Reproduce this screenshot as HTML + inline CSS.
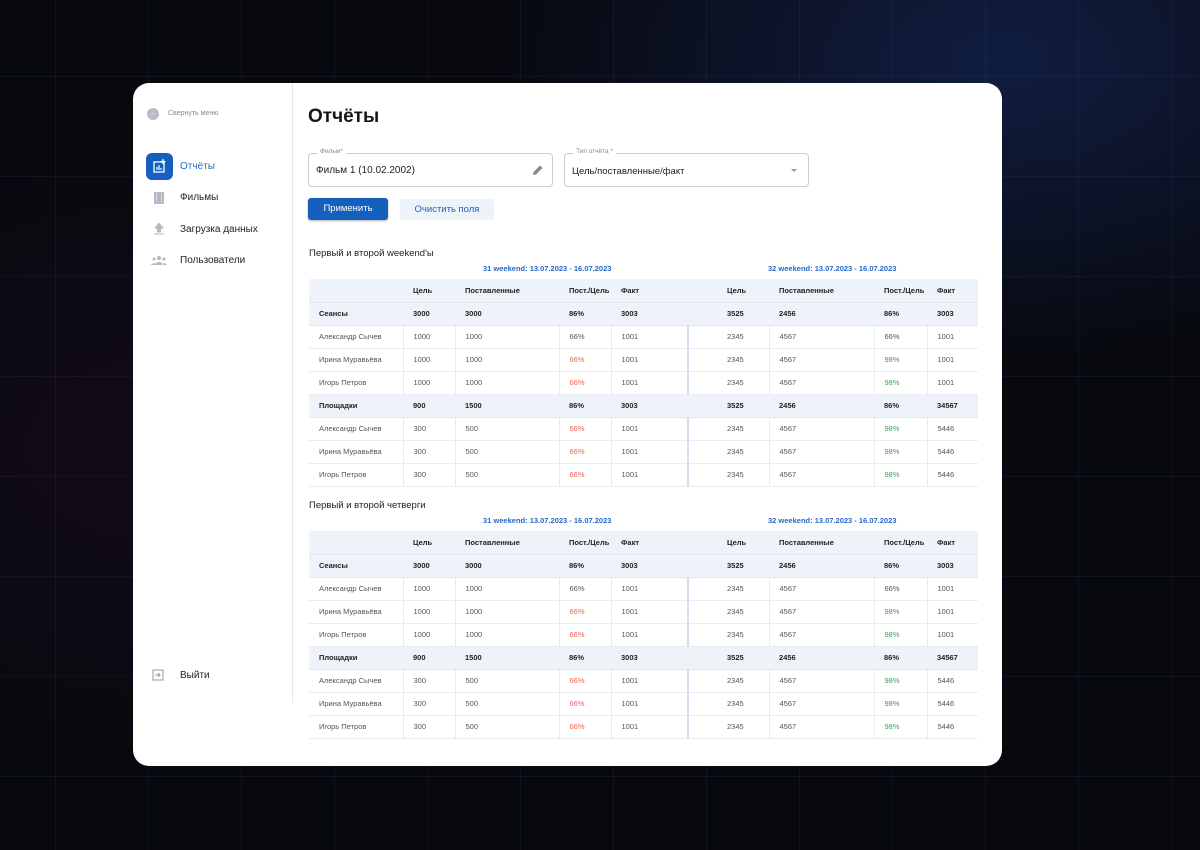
<!DOCTYPE html>
<html><head><meta charset="utf-8"><style>
*{margin:0;padding:0;box-sizing:border-box}
body{width:1200px;height:850px;overflow:hidden;font-family:"Liberation Sans",sans-serif;position:relative;
background:radial-gradient(ellipse 500px 300px at 1000px 60px,rgba(30,60,140,.4),transparent),radial-gradient(ellipse 400px 300px at 150px 450px,rgba(60,20,60,.2),transparent),#08090f;}
.grid{position:absolute;inset:0;background-image:linear-gradient(90deg,rgba(60,70,120,.16) 1px,transparent 1px),linear-gradient(rgba(60,70,120,.16) 1px,transparent 1px);background-size:93px 100px;background-position:55px 76px}
.card{position:absolute;left:133px;top:83px;width:869px;height:683px;background:#fff;border-radius:16px;overflow:hidden}
.side{position:absolute;left:0;top:0;width:160px;height:620px;border-right:1px solid #e6e8ec}
.ab{position:absolute;font-size:10px;color:#222}
h1{position:absolute;left:175px;top:23px;font-size:19px;font-weight:bold;color:#14161c}
.field{position:absolute;border:1px solid #c9ccd2;border-radius:4px;height:34px}
.field .lb{position:absolute;top:-6px;left:8px;background:#fff;padding:0 3px;font-size:6.5px;color:#888}
.field .v{position:absolute;left:7px;top:11px;font-size:10px;color:#222}
table{position:absolute;left:176px;border-collapse:collapse;table-layout:fixed;width:669px;font-size:7.5px;color:#555}
td{height:23px;padding-left:10px;border-bottom:1px solid #e8ecf1;white-space:nowrap}
tr.h td{background:#eef3fa;color:#222;font-weight:bold;border-bottom:1px solid #e3e8f0}
tr.r td{border-right:1px solid #e8ecf1}
tr.r td:last-child{border-right:none}
tr.r td.fk{border-right:2px solid #d5deea}
tr.r td.sep{border-right:none;padding:0}
tr.h td.sep{padding:0}
.red{color:#e8605a}.grn{color:#3aa05a}
.cap{position:absolute;font-size:7.5px;font-weight:bold;color:#2868c6}
.sec{position:absolute;left:176px;font-size:9.5px;color:#222}
</style></head><body>
<div class="grid"></div>
<div class="card">
<div class="side">
 <div style="position:absolute;left:14px;top:25px;width:12px;height:12px;border-radius:50%;background:#b8bcc4"><div style="position:absolute;left:3px;top:3px;color:#fff;font-size:7px;line-height:6px">←</div></div>
 <div class="ab" style="left:35px;top:27px;font-size:7px;color:#888">Свернуть меню</div>
 <div style="position:absolute;left:13px;top:70px;width:27px;height:27px;border-radius:6px;background:#1560bd">
  <svg width="27" height="27" viewBox="0 0 27 27"><rect x="8" y="9" width="10" height="10" fill="none" stroke="#fff" stroke-width="1.3"/><path d="M11 17v-3M13 17v-5M15 17v-2" stroke="#fff" stroke-width="1.2"/><path d="M17 6v5M14.5 8.5h5" stroke="#fff" stroke-width="1.3"/></svg></div>
 <div class="ab" style="left:47px;top:78px;color:#2a6bc8">Отчёты</div>
 <svg style="position:absolute;left:21px;top:109px" width="10" height="12"><rect width="10" height="12" fill="#b4b8c0"/><path d="M2.5 1v10M7.5 1v10" stroke="#fff" stroke-width="1" stroke-dasharray="1 1"/></svg>
 <div class="ab" style="left:47px;top:109px">Фильмы</div>
 <svg style="position:absolute;left:21px;top:140px" width="10" height="12"><path d="M5 0L1 5h2.5v4h3V5H9z M0 11h10" fill="#b4b8c0" stroke="#b4b8c0" stroke-width="1"/></svg>
 <div class="ab" style="left:47px;top:141px">Загрузка данных</div>
 <svg style="position:absolute;left:18px;top:172px" width="16" height="10"><circle cx="8" cy="3" r="2" fill="#b4b8c0"/><circle cx="3" cy="4" r="1.5" fill="#b4b8c0"/><circle cx="13" cy="4" r="1.5" fill="#b4b8c0"/><path d="M4 10a4 3 0 0 1 8 0zM0 10a3 2.5 0 0 1 5-1v1zM16 10a3 2.5 0 0 0-5-1v1z" fill="#b4b8c0"/></svg>
 <div class="ab" style="left:47px;top:172px">Пользователи</div>
 <svg style="position:absolute;left:19px;top:586px" width="12" height="12"><path d="M1 1h10v10H1z" fill="none" stroke="#999" stroke-width="1"/><path d="M3 6h5M6 4l2 2-2 2" fill="none" stroke="#999" stroke-width="1"/></svg>
 <div class="ab" style="left:47px;top:587px">Выйти</div>
</div>
<h1>Отчёты</h1>
<div class="field" style="left:175px;top:70px;width:245px"><span class="lb">Фильм*</span><span class="v">Фильм 1 (10.02.2002)</span>
<svg style="position:absolute;right:9px;top:11px" width="11" height="11"><path d="M1 10l.5-3L8 .5l2.5 2.5L4 9.5z" fill="#888"/></svg></div>
<div class="field" style="left:431px;top:70px;width:245px"><span class="lb">Тип отчёта *</span><span class="v" style="top:12px;font-size:9.5px">Цель/поставленные/факт</span>
<div style="position:absolute;right:11px;top:15px;border:3px solid transparent;border-top:3px solid #999"></div></div>
<div style="position:absolute;left:175px;top:115px;width:80px;height:22px;background:#1560bd;border-radius:3px;color:#fff;font-size:9.5px;text-align:center;line-height:22px;box-shadow:0 1px 2px rgba(0,0,0,.3)">Применить</div>
<div style="position:absolute;left:267px;top:116px;width:94px;height:21px;background:#eef3fa;border-radius:3px;color:#2a5fb0;font-size:9.5px;text-align:center;line-height:21px">Очистить поля</div>

<div class="sec" style="top:165px">Первый и второй weekend'ы</div>
<div class="cap" style="left:350px;top:181px">31 weekend: 13.07.2023 - 16.07.2023</div>
<div class="cap" style="left:635px;top:181px">32 weekend: 13.07.2023 - 16.07.2023</div>
<table style="top:196px" id="t1"></table>

<div class="sec" style="top:417px">Первый и второй четверги</div>
<div class="cap" style="left:350px;top:433px">31 weekend: 13.07.2023 - 16.07.2023</div>
<div class="cap" style="left:635px;top:433px">32 weekend: 13.07.2023 - 16.07.2023</div>
<table style="top:448px" id="t2"></table>
</div>
<script>
var cols='<colgroup><col style="width:94px"><col style="width:52px"><col style="width:104px"><col style="width:52px"><col style="width:77px"><col style="width:29px"><col style="width:52px"><col style="width:105px"><col style="width:53px"><col style="width:51px"></colgroup>';
function h(a){return '<tr class="h">'+a.map(function(x,i){return '<td'+(i==5?' class="sep"':'')+'>'+x+'</td>'}).join('')+'</tr>'}
function r(n,a,b,c,cc,d,e,f,g,gc,k){return '<tr class="r"><td>'+n+'</td><td>'+a+'</td><td>'+b+'</td><td class="'+cc+'">'+c+'</td><td class="fk">'+d+'</td><td class="sep"></td><td>'+e+'</td><td>'+f+'</td><td class="'+gc+'">'+g+'</td><td>'+k+'</td></tr>'}
var s=cols+h(['','Цель','Поставленные','Пост./Цель','Факт','','Цель','Поставленные','Пост./Цель','Факт'])
+h(['Сеансы','3000','3000','86%','3003','','3525','2456','86%','3003'])
+r('Александр Сычев','1000','1000','66%','','1001','2345','4567','66%','','1001')
+r('Ирина Муравьёва','1000','1000','66%','red','1001','2345','4567','98%','grn','1001')
+r('Игорь Петров','1000','1000','66%','red','1001','2345','4567','98%','grn','1001')
+h(['Площадки','900','1500','86%','3003','','3525','2456','86%','34567'])
+r('Александр Сычев','300','500','66%','red','1001','2345','4567','98%','grn','5446')
+r('Ирина Муравьёва','300','500','66%','red','1001','2345','4567','98%','grn','5446')
+r('Игорь Петров','300','500','66%','red','1001','2345','4567','98%','grn','5446');
document.getElementById('t1').innerHTML=s;document.getElementById('t2').innerHTML=s;
</script>
</body></html>
